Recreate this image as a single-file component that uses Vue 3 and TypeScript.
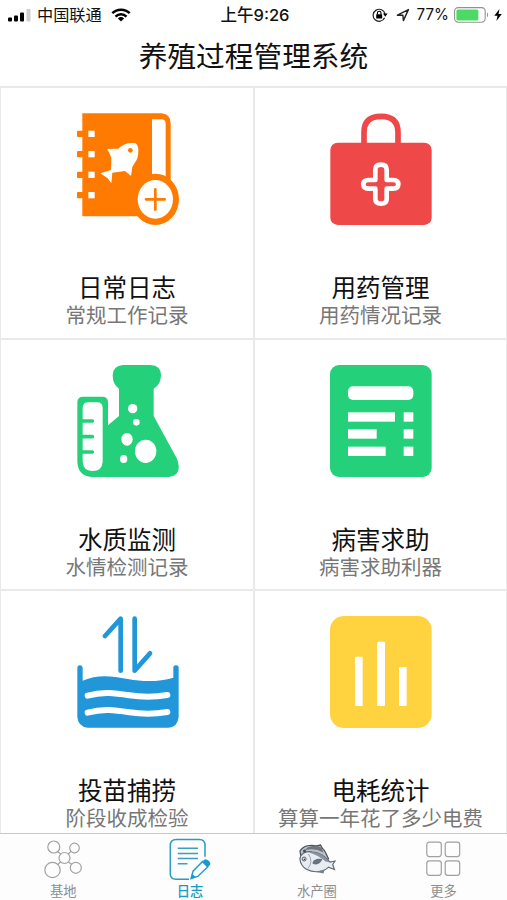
<script setup lang="ts">
interface Feature {
  icon: 'log' | 'medicine' | 'water' | 'disease' | 'harvest' | 'power'
  title: string
  note: string
}

interface Tab {
  icon: 'base' | 'diary' | 'fish' | 'more'
  label: string
  active?: boolean
}

const features: Feature[] = [
  { icon: 'log', title: '日常日志', note: '常规工作记录' },
  { icon: 'medicine', title: '用药管理', note: '用药情况记录' },
  { icon: 'water', title: '水质监测', note: '水情检测记录' },
  { icon: 'disease', title: '病害求助', note: '病害求助利器' },
  { icon: 'harvest', title: '投苗捕捞', note: '阶段收成检验' },
  { icon: 'power', title: '电耗统计', note: '算算一年花了多少电费' },
]

const tabs: Tab[] = [
  { icon: 'base', label: '基地' },
  { icon: 'diary', label: '日志', active: true },
  { icon: 'fish', label: '水产圈' },
  { icon: 'more', label: '更多' },
]
</script>

<template>
  <div class="screen">
    <div class="status">
      <div class="status-left">
        <svg class="signal" viewBox="0 0 23 13" width="23" height="13">
          <rect x="0" y="8.5" width="4" height="4" rx="1" />
          <rect x="6" y="6.5" width="4" height="6" rx="1" />
          <rect x="12" y="3.5" width="4" height="9" rx="1" />
          <rect x="18.5" y="0" width="4" height="12.5" rx="1" fill="#cfcfcf" />
        </svg>
        <span class="carrier">中国联通</span>
        <svg viewBox="0 0 20 14" width="20" height="14">
          <g fill="none" stroke="#000" stroke-width="2.5">
            <path d="M1.3 5.2A12.4 12.4 0 0 1 18.7 5.2" />
            <path d="M4.5 8.6A7.8 7.8 0 0 1 15.5 8.6" />
          </g>
          <path d="M6.9 10.4A4.5 4.5 0 0 1 13.1 10.4L10 13.6Z" />
        </svg>
      </div>
      <span class="clock">上午9:26</span>
      <div class="status-right">
        <svg viewBox="0 0 16 14" width="16" height="14">
          <path d="M12.6 9.8A6 6 0 1 1 13 6" fill="none" stroke="#222" stroke-width="1.2" />
          <path d="M11 5.6h4.6l-2.3 3.2z" />
          <rect x="4.2" y="6.2" width="6" height="4.3" rx=".5" />
          <path d="M5.4 6.4V5a1.8 1.8 0 0 1 3.6 0v1.4" fill="none" stroke="#000" stroke-width="1.1" />
        </svg>
        <svg class="arrow" viewBox="0 0 14 14" width="14" height="14">
          <path d="M1.4 7.2L12.4 1.6L7.4 12.6L6.9 7.2Z" fill="none" stroke="#222" stroke-width="1.4" stroke-linejoin="round" />
        </svg>
        <span class="percent">77%</span>
        <svg class="battery" viewBox="0 0 36 16" width="36" height="16">
          <rect x=".6" y=".6" width="30.6" height="14.6" rx="3.6" fill="#fff" stroke="#929292" stroke-width="1.1" />
          <rect x="2.4" y="2.4" width="22" height="11" rx="1.5" fill="#4cd964" />
          <path d="M33 5.2q2.3 2.7 0 5.4z" fill="#929292" />
        </svg>
        <svg class="bolt" viewBox="0 0 8 12" width="8" height="12">
          <path d="M5.5 0L0.3 6.8H3.5L2.4 12L7.8 4.9H4.5Z" />
        </svg>
      </div>
    </div>

    <h1 class="heading">养殖过程管理系统</h1>

    <main class="grid">
      <section v-for="item in features" :key="item.title" class="cell">
        <svg v-if="item.icon === 'log'" class="art" viewBox="50 40 306 336">
          <g fill="#ff7a00">
            <path d="M66 41H304Q331 43 331 72V270L250 350H66Z" />
            <rect x="50" y="93" width="22" height="19" rx="3" />
            <rect x="50" y="154" width="22" height="19" rx="3" />
            <rect x="50" y="216" width="22" height="19" rx="3" />
            <rect x="50" y="277" width="22" height="19" rx="3" />
          </g>
          <g fill="#fff">
            <rect x="84" y="93" width="19" height="19" />
            <rect x="84" y="154" width="19" height="19" />
            <rect x="84" y="216" width="19" height="19" />
            <rect x="84" y="277" width="19" height="19" />
            <path d="M275 59H305Q316 60 316 72V240H275Z" />
            <path d="M140 148L174 147C188 132 207 127 226 131C236 139 236 158 231 176C226 188 220 194 216 202L212 229L194 214L156 219L153 251L142 236L120 221L152 211L153 181Q153 167 140 148Z" />
          </g>
          <circle cx="210" cy="152" r="7" fill="#ff7a00" />
          <ellipse cx="285" cy="299" rx="71" ry="77" fill="#ff7a00" />
          <ellipse cx="285" cy="299" rx="53" ry="58" fill="#fff" />
          <path d="M257 299H313M285 269V330" stroke="#ff7a00" stroke-width="8" stroke-linecap="round" />
        </svg>

        <svg v-else-if="item.icon === 'medicine'" class="art" viewBox="60 40 306 336">
          <rect x="61" y="129" width="304" height="247" rx="22" fill="#ee4848" />
          <path d="M162 135V98Q162 50 213 50T264 98V135" fill="none" stroke="#ee4848" stroke-width="17" />
          <path d="M196 241V210Q196 195 213 195T230 210V241H250Q265 241 265 254T250 267H230V298Q230 312 213 312T196 298V267H175Q160 267 160 254T175 241Z" fill="none" stroke="#fff" stroke-width="14" stroke-linejoin="round" />
        </svg>

        <svg v-else-if="item.icon === 'water'" class="art" viewBox="50 45 306 336">
          <path d="M188 45H270Q302 47 302 75Q302 104 280 116V198L350 326Q368 375 326 381H94Q51 377 51 332V157Q51 140 68 140H126Q143 140 143 157V226L176 198V116Q157 104 157 76Q157 48 188 45Z" fill="#25d07a" />
          <path d="M84 157H111Q127 157 127 174V335Q125 363 97 363T67 335V174Q67 157 84 157Z" fill="#fff" />
          <path d="M62 213H96M62 260H96M62 306H96" stroke="#25d07a" stroke-width="11" stroke-linecap="round" />
          <g fill="#fff">
            <circle cx="217" cy="176" r="14" />
            <circle cx="228" cy="217" r="10" />
            <ellipse cx="200" cy="268" rx="17" ry="19" />
            <ellipse cx="190" cy="327" rx="11" ry="12" />
            <ellipse cx="256" cy="304" rx="32" ry="35" />
          </g>
        </svg>

        <svg v-else-if="item.icon === 'disease'" class="art" viewBox="60 45 306 336">
          <rect x="60" y="45" width="305" height="336" rx="27" fill="#25d07a" />
          <g fill="#fff">
            <rect x="114" y="109" width="196" height="41" rx="15" />
            <rect x="114" y="187" width="141" height="28" />
            <rect x="281" y="187" width="29" height="28" />
            <rect x="114" y="238" width="86" height="28" />
            <rect x="281" y="238" width="29" height="28" />
            <rect x="114" y="290" width="113" height="28" />
            <rect x="281" y="290" width="29" height="28" />
          </g>
        </svg>

        <svg v-else-if="item.icon === 'harvest'" class="art" viewBox="50 50 306 336">
          <path d="M51 205Q51 198 58.500 198T67 205V244C112 224 153 230 202 239C262 250 300 245 339 235V205Q339 198 347 198T355 205V353Q352 383 325 385H82Q53 382 51 353Z" fill="#2196d9" />
          <g fill="none" stroke="#2196d9" stroke-width="14" stroke-linecap="round" stroke-linejoin="round">
            <path d="M134 110L181 58V214" />
            <path d="M223 58V214L269 162" />
          </g>
          <g fill="none" stroke="#fff" stroke-width="18" stroke-linecap="round">
            <path d="M82 289C128 276 163 281 207 288Q266 297 321 287" />
            <path d="M82 340C128 327 163 332 207 339Q266 348 321 338" />
          </g>
        </svg>

        <svg v-else class="art" viewBox="60 50 306 336">
          <rect x="60" y="50" width="305" height="336" rx="42" fill="#ffd33f" />
          <g fill="#fff">
            <rect x="135" y="172" width="23" height="148" rx="3" />
            <rect x="201" y="127" width="24" height="193" rx="3" />
            <rect x="267" y="203" width="23" height="117" rx="3" />
          </g>
        </svg>

        <h2 class="title">{{ item.title }}</h2>
        <p class="note">{{ item.note }}</p>
      </section>
    </main>

    <nav class="tabs">
      <div v-for="tab in tabs" :key="tab.label" class="tab" :class="{ active: tab.active }">
        <svg v-if="tab.icon === 'base'" class="tab-icon" viewBox="-1.500 0.500 42 42">
          <g fill="none" stroke="#a2a2a2" stroke-width="1.2">
            <circle cx="10.300" cy="9.500" r="6" />
            <circle cx="31" cy="10.500" r="4.800" />
            <circle cx="21" cy="20.500" r="5.500" />
            <circle cx="9" cy="32.500" r="7.700" />
            <circle cx="32.300" cy="30.300" r="5.500" />
            <path d="M14.300 14.200L17.200 16.400M24.700 16.500L27.600 13.800M17.100 24.500L14.300 27M24.800 24.500L28.200 26.800" />
          </g>
        </svg>
        <svg v-else-if="tab.icon === 'diary'" class="tab-icon" viewBox="0 0.300 42 42">
          <path d="M20 41.500H6.800Q1.300 41.500 1.300 36V7.700Q1.300 1.700 7.300 1.700H30.500Q36 1.700 36 7.700V19" fill="none" stroke="#2b9bbf" stroke-width="1.500" />
          <path d="M8.700 10.500H29M8.700 15.700H29M8.700 20.800H29M8.700 26H18.500" stroke="#3b9fbf" stroke-width="1.500" />
          <path d="M22 41L24 33.500L33.500 23.800L38.800 29L29 38.500Z" fill="#fff" stroke="#1e9ccc" stroke-width="1.400" />
          <path d="M33 24L36 21.600Q37.500 21.300 40 23.300Q42 25.500 41.200 27L38.400 29.500ZM22 41L23.400 36.300L26.600 39.200Z" fill="#139bd0" />
        </svg>
        <svg v-else-if="tab.icon === 'fish'" class="tab-icon" viewBox="-0.500 -0.500 42 42">
          <path d="M3.500 12.500C7 7 14 6 20 7.500L24 6.500L26 10C29 12 30 17 32 20L25 30L5 22Z" fill="#bdc2c8" stroke="#4c535c" stroke-width="1.300" />
          <path d="M11 9Q18 5.500 25 9L27 14Q17 8.500 8 12Z" fill="#6f757d" />
          <path d="M3.400 20.500C4 15 9 12.500 15.500 13.300C24 13.600 29 19 33.500 23.500L38.500 22.500L36.200 26L38 31L32 28.600C27 33.500 18 35 10 30.800C5.700 28.500 4 25 3.400 20.500Z" fill="#e8edf4" stroke="#626b78" stroke-width="1.200" />
          <path d="M12 14Q22 12 30 20.500L33.500 24L29 23Q22 16.500 12 14Z" fill="#8992a0" />
          <path d="M12 15.500Q17 23 11.500 30" fill="none" stroke="#9aa4b1" />
          <path d="M16 25C16 21 21 19.500 26 20.500C24 25.500 20 27.200 16 25Z" fill="#677280" />
          <path d="M20 33.500L27 35L28 31Z" fill="#76808d" />
          <circle cx="7.600" cy="20.500" r="2" fill="#fff" stroke="#535b65" />
          <circle cx="7.800" cy="20.700" r=".8" fill="#222" />
          <circle cx="8" cy="12.500" r="1.500" fill="#444b53" />
        </svg>
        <svg v-else class="tab-icon" viewBox="0.800 0.500 42 42">
          <g fill="none" stroke="#a0a0a0" stroke-width="1.200">
            <rect x="4.600" y="4.600" width="14.500" height="14.500" rx="2.500" />
            <rect x="23" y="4.600" width="14.500" height="14.500" rx="2.500" />
            <rect x="4.600" y="23.300" width="14.500" height="14.500" rx="2.500" />
            <rect x="23" y="23.300" width="14.500" height="14.500" rx="2.500" />
          </g>
        </svg>
        <span class="label">{{ tab.label }}</span>
      </div>
    </nav>
  </div>
</template>

<style>
body {
  margin: 0;
  background: #fff;
}
</style>

<style scoped>
.screen {
  display: flex;
  flex-direction: column;
  width: 507px;
  height: 900px;
  overflow: hidden;
  background: #fff;
  color: #111;
  font-family: Inter, "Noto Sans CJK SC", sans-serif;
}

.status {
  display: grid;
  grid-template-columns: 1fr auto 1fr;
  align-items: center;
  height: 30px;
  padding: 0 5px 0 8px;
  font-size: 16px;
  line-height: 30px;
}

.status-left,
.status-right {
  display: flex;
  align-items: center;
}

.status-right {
  justify-content: flex-end;
}

.carrier {
  margin: 0 9px 0 6px;
  font-size: 16.200px;
}

.clock {
  font-size: 16.500px;
  font-weight: 500;
}

.arrow {
  margin: 0 7px 0 8px;
}

.percent {
  font-size: 15.200px;
}

.battery {
  margin-left: 5px;
}

.bolt {
  margin-left: 4px;
}

.heading {
  height: 56px;
  margin: 0;
  font-size: 28.700px;
  font-weight: 400;
  line-height: 54px;
  text-align: center;
}

.grid {
  display: grid;
  grid-template-columns: 252px 251px;
  grid-auto-rows: 249.500px;
  gap: 2px;
  box-sizing: border-box;
  height: 747px;
  padding: 2px 1px 0;
  overflow: hidden;
  background: #e9e9e9;
}

.cell {
  display: flex;
  flex-direction: column;
  align-items: center;
  background: #fff;
}

.art {
  width: 102px;
  height: 112px;
  margin-top: 25px;
}

.cell:nth-child(odd) .art {
  margin-left: 1px;
}

.title {
  margin: 46px 0 0;
  font-size: 24.500px;
  font-weight: 400;
  line-height: 34px;
}

.note {
  margin: -3px 0 0;
  color: #777;
  font-size: 20.500px;
  line-height: 28px;
  white-space: nowrap;
}

.tabs {
  display: grid;
  grid-template-columns: repeat(4, 1fr);
  height: 67px;
  box-sizing: border-box;
  border-top: 1.500px solid #c8c8c8;
  background: #fdfdfd;
}

.tab {
  display: flex;
  flex-direction: column;
  align-items: center;
  padding-top: 4px;
  color: #8e8e8e;
}

.tab.active {
  color: #169bc5;
}

.tab-icon {
  width: 42px;
  height: 42px;
}

.label {
  margin-top: 1px;
  font-size: 13.300px;
  line-height: 20px;
}

.active .label {
  font-weight: 500;
}
</style>
